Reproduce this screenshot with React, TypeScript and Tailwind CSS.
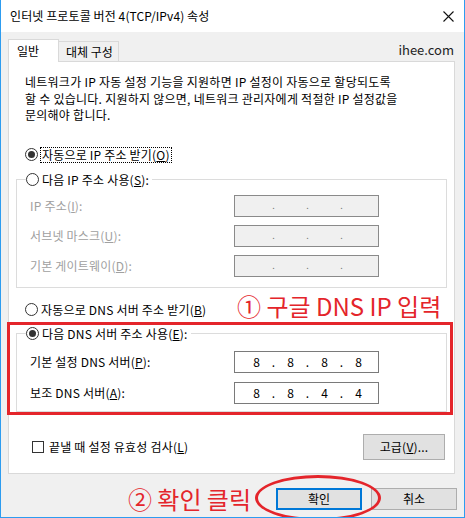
import React from "react";

const font = "font-['Noto_Sans_CJK_KR','Noto_Sans',sans-serif]";

function Radio({ checked }: { checked?: boolean }) {
  return (
    <span className="flex h-[13px] w-[13px] shrink-0 items-center justify-center rounded-full border border-[#333] bg-white">
      {checked && <span className="h-[7px] w-[7px] rounded-full bg-[#333]" />}
    </span>
  );
}

function IpBox({ parts, disabled }: { parts: string[]; disabled?: boolean }) {
  return (
    <div
      className={`flex h-[22px] w-[145px] items-center border pl-[8px] tracking-normal ${
        disabled ? "border-[#8a8a8a] bg-[#f0f0f0] text-[#6d6d6d]" : "border-[#7a7a7a] bg-white text-black"
      }`}
    >
      {parts.map((p, i) => (
        <React.Fragment key={i}>
          {i > 0 && (
            <span className={`w-[7px] text-center ${disabled ? "text-[9px] text-[#7a7a7a]" : ""}`}>.</span>
          )}
          <span className="w-[27px] text-center">{p}</span>
        </React.Fragment>
      ))}
    </div>
  );
}

function Row({
  label,
  parts,
  disabled,
}: {
  label: React.ReactNode;
  parts: string[];
  disabled?: boolean;
}) {
  return (
    <div className="flex items-center">
      <span className={`w-[204px] ${disabled ? "text-[#a0a0a0]" : ""}`}>{label}</span>
      <IpBox parts={parts} disabled={disabled} />
    </div>
  );
}

export default function App() {
  return (
    <div
      className={`${font} relative flex h-[518px] w-[465px] flex-col overflow-hidden border-x border-b border-[#2d9cf0] bg-[#f0f0f0] text-[12px] leading-[16px] text-black`}
    >
      {/* title bar */}
      <div className="flex h-[32px] shrink-0 items-center justify-between bg-white pl-[9px] pr-[10px]">
        <span className="tracking-[0.1px]">인터넷 프로토콜 버전 4(TCP/IPv4) 속성</span>
        <svg width="11" height="11" viewBox="0 0 11 11">
          <path d="M0.5 0.5 L10.5 10.5 M10.5 0.5 L0.5 10.5" stroke="#111" strokeWidth="1.1" />
        </svg>
      </div>

      {/* tabs */}
      <div className="flex h-[29px] shrink-0 items-end pl-[7px] pr-[10px]">
        <div className="relative z-10 -mb-px flex h-[23px] w-[51px] items-center border border-b-0 border-[#d9d9d9] bg-white pb-[1px] pl-[8px]">
          일반
        </div>
        <div className="flex h-[20px] w-[60px] items-center border border-b-0 border-l-0 border-[#d9d9d9] bg-[#f0f0f0] pl-[7px]">
          대체 구성
        </div>
        <span className="mb-[3px] ml-auto text-[13px] text-[#222]">ihee.com</span>
      </div>

      {/* panel */}
      <div className="ml-[7px] flex h-[413px] w-[447px] shrink-0 flex-col border border-[#d9d9d9] bg-white tracking-[0.2px]">
        <p className="mt-[12px] pl-[16px] leading-[16.5px] tracking-[0.25px]">
          네트워크가 IP 자동 설정 기능을 지원하면 IP 설정이 자동으로 할당되도록
          <br />할 수 있습니다. 지원하지 않으면, 네트워크 관리자에게 적절한 IP 설정값을
          <br />문의해야 합니다.
        </p>

        <div className="ml-[16px] mt-[23px] flex h-[16px] items-center gap-[2px]">
          <Radio checked />
          <span className="border border-dotted border-black px-[1px] leading-[14px]">
            자동으로 IP 주소 받기(<u>O</u>)
          </span>
        </div>

        <fieldset className="ml-[7px] mt-[9px] w-[431px] border border-[#dcdcdc] pb-[10px] pl-[13px]">
          <legend className="-ml-[4px] flex h-[16px] items-center gap-[3px] pr-[3px]">
            <Radio />
            <span>
              다음 IP 주소 사용(<u>S</u>):
            </span>
          </legend>
          <div className="mt-[7px] flex flex-col gap-[8px]">
            <Row label={<>IP 주소(<u>I</u>):</>} parts={["", "", "", ""]} disabled />
            <Row label={<>서브넷 마스크(<u>U</u>):</>} parts={["", "", "", ""]} disabled />
            <Row label={<>기본 게이트웨이(<u>D</u>):</>} parts={["", "", "", ""]} disabled />
          </div>
        </fieldset>

        <div className="ml-[16px] mt-[14px] flex h-[16px] items-center gap-[3px]">
          <Radio />
          <span>
            자동으로 DNS 서버 주소 받기(<u>B</u>)
          </span>
        </div>

        <fieldset className="ml-[7px] mt-[8px] w-[431px] border border-[#dcdcdc] pb-[7px] pl-[13px]">
          <legend className="-ml-[4px] flex h-[16px] items-center gap-[3px] pr-[3px]">
            <Radio checked />
            <span>
              다음 DNS 서버 주소 사용(<u>E</u>):
            </span>
          </legend>
          <div className="mt-[9px] flex flex-col gap-[9px]">
            <Row label={<>기본 설정 DNS 서버(<u>P</u>):</>} parts={["8", "8", "8", "8"]} />
            <Row label={<>보조 DNS 서버(<u>A</u>):</>} parts={["8", "8", "4", "4"]} />
          </div>
        </fieldset>

        <div className="mt-[22px] flex items-center justify-between pl-[23px] pr-[9px]">
          <div className="flex items-center gap-[5px]">
            <span className="h-[12px] w-[12px] border border-[#333] bg-white" />
            <span>
              끝낼 때 설정 유효성 검사(<u>L</u>)
            </span>
          </div>
          <button className="flex h-[26px] w-[82px] items-center justify-center border border-[#adadad] bg-[#e1e1e1]">
            고급(<u>V</u>)...
          </button>
        </div>
      </div>

      {/* bottom buttons */}
      <div className="mt-[13px] flex items-center justify-end gap-[9px] pr-[7px]">
        <span className="mr-[16px] text-[24px] leading-[24px] text-[#e4252b]">② 확인 클릭</span>
        <button className="flex h-[22px] w-[86px] items-center justify-center border-2 border-[#0078d7] bg-[#e1e1e1]">
          확인
        </button>
        <button className="flex h-[22px] w-[86px] items-center justify-center border border-[#adadad] bg-[#e1e1e1]">
          취소
        </button>
      </div>

      {/* annotations */}
      <span className="absolute left-[236px] top-[294px] text-[24px] leading-[24px] text-[#e4252b]">
        ① 구글 DNS IP 입력
      </span>
      <div className="pointer-events-none absolute left-[6px] top-[322px] h-[93px] w-[446px] border-[3px] border-[#e4252b]" />
      <div className="pointer-events-none absolute left-[254px] top-[475px] h-[46px] w-[126px] rounded-[50%] border-[3px] border-[#e4252b]" />
    </div>
  );
}
